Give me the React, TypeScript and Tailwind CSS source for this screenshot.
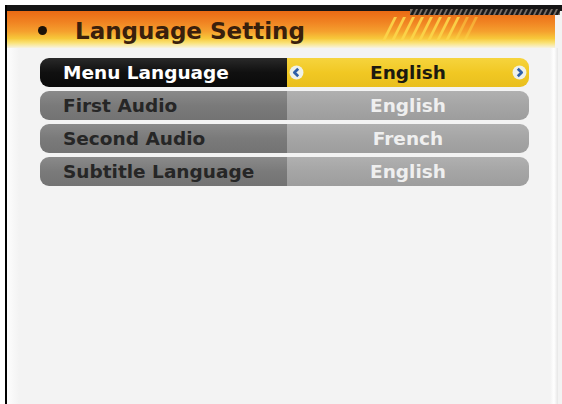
import React from "react";

function Arrow({ dir }: { dir: "l" | "r" }) {
  return (
    <svg width="15" height="15" viewBox="0 0 14 14" className="shrink-0">
      <circle cx="7" cy="7" r="6.5" fill="#eef1ea" />
      {dir === "l" ? (
        <path d="M8.6 3.6 L5 7 L8.6 10.4" stroke="#2f5fa8" strokeWidth="2.6" fill="none" strokeLinejoin="round" />
      ) : (
        <path d="M5.4 3.6 L9 7 L5.4 10.4" stroke="#2f5fa8" strokeWidth="2.6" fill="none" strokeLinejoin="round" />
      )}
    </svg>
  );
}

function GrayRow({ label, value }: { label: string; value: string }) {
  return (
    <div className="flex h-[29px] w-[489px] rounded-[9px] overflow-hidden">
      <div className="w-[247px] h-full bg-gradient-to-b from-[#8a8a8a] via-[#7a7a7a] to-[#737373] flex items-center pl-[23px] text-[#262626] text-[18.5px] font-bold">
        {label}
      </div>
      <div className="flex-1 h-full bg-gradient-to-b from-[#b0b0b0] via-[#a5a5a5] to-[#9d9d9d] flex items-center justify-center text-[#efefef] text-[18.5px] font-bold">
        {value}
      </div>
    </div>
  );
}

export default function App() {
  return (
    <div className="w-[562px] h-[404px] bg-white pt-[5px] pl-[5px] overflow-hidden font-['DejaVu_Sans',sans-serif]">
      <div className="relative h-[399px] w-[557px] border-l-[2px] border-black flex flex-col bg-[#f3f3f3]">
        <div className="h-[6px] bg-[#151515] w-full" />
        <div className="h-[37px] w-[548px] bg-[linear-gradient(to_bottom,#ea6a14_0%,#f08322_30%,#f5a02e_55%,#f7c83a_74%,#fae277_86%,#f7f3e2_100%)] flex items-start pl-[31px] pt-[7px]">
          <div className="w-[9px] h-[9px] rounded-full bg-[#1c1208] mt-[8px]" />
          <div className="ml-[28px] text-[23px] leading-[26px] font-bold text-[#3a200c]">
            Language Setting
          </div>
        </div>
        <svg className="absolute left-[373px] top-[12px]" width="100" height="24" viewBox="0 0 100 24">
          {Array.from({ length: 10 }).map((_, i) => (
            <path
              key={i}
              d={`M${i * 9 + 2} 24 L${i * 9 + 14} 0 L${i * 9 + 17} 0 L${i * 9 + 5} 24 Z`}
              fill="#fbd64a"
              opacity={i > 7 ? 0.5 : 0.9}
            />
          ))}
        </svg>
        <svg className="absolute left-[403px] top-[2px]" width="150" height="8" viewBox="0 0 150 8">
          <rect x="0" y="0" width="150" height="8" fill="#7a7068" />
          {Array.from({ length: 30 }).map((_, i) => (
            <path key={i} d={`M${i * 5} 8 L${i * 5 + 4} 0 L${i * 5 + 7} 0 L${i * 5 + 3} 8 Z`} fill="#1a1a1a" />
          ))}
          <rect x="0" y="0" width="150" height="2" fill="#151515" />
        </svg>
        <div className="absolute left-0 top-[43px] bottom-0 w-[12px] bg-gradient-to-r from-[#fdfdfd] to-[#f3f3f3]" />
        <div className="absolute right-[4px] top-[43px] bottom-0 w-[8px] bg-gradient-to-r from-[#f3f3f3] via-[#ffffff] to-[#e6e6e6]" />
        <div className="relative flex flex-col gap-[4px] pt-[10px] pl-[33px]">
          <div className="flex h-[29px] w-[489px]">
            <div className="w-[247px] h-full rounded-l-[9px] bg-gradient-to-b from-[#2a2a2a] via-[#101010] to-[#0a0a0a] flex items-center pl-[23px] text-white text-[18.5px] font-bold">
              Menu Language
            </div>
            <div className="flex-1 h-full rounded-r-[9px] bg-gradient-to-b from-[#f6d43c] via-[#f1c823] to-[#e9bf1e] flex items-center justify-between px-[2px] text-[#1c1a10] text-[18.5px] font-bold">
              <Arrow dir="l" />
              <span>English</span>
              <Arrow dir="r" />
            </div>
          </div>
          <GrayRow label="First Audio" value="English" />
          <GrayRow label="Second Audio" value="French" />
          <GrayRow label="Subtitle Language" value="English" />
        </div>
      </div>
    </div>
  );
}
